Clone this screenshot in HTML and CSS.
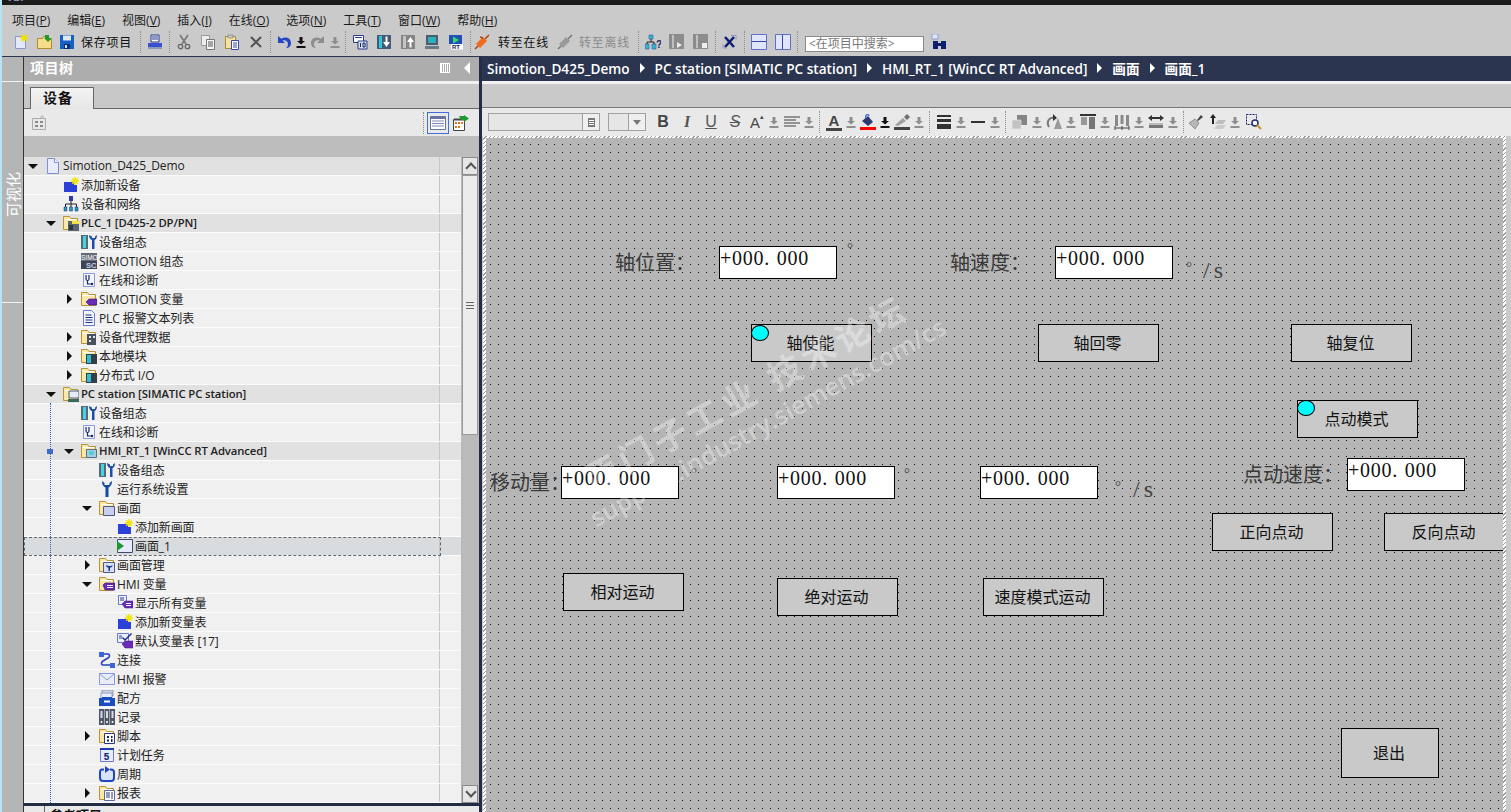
FILE: index.html
```html
<!DOCTYPE html>
<html lang="zh-CN">
<head>
    <meta charset="UTF-8">
    <title>Simotion_D425_Demo</title>
    <link rel="stylesheet" href="styles.css">
</head>
<body>
    <!-- icon sprite -->
    <svg class="sprite" xmlns="http://www.w3.org/2000/svg">
        <symbol id="i-add" viewBox="0 0 16 16"><path d="M1 5h10v3h3v7H1z" fill="#2c3fd8"/><path d="M12 0v8M8 4h8M9.2 1.2l5.6 5.6M14.8 1.2L9.200 6.800" stroke="#f2e600" stroke-width="1.400"/></symbol>
        <symbol id="i-new" viewBox="0 0 16 16"><path d="M2.500 2.500h10v12h-10z" fill="#e4e8fb" stroke="#8c96cf"/><path d="M11 0v8M7 4h8M8.200 1.200l5.600 5.600M13.800 1.200L8.200 6.800" stroke="#efe000" stroke-width="1.300"/></symbol>
        <symbol id="i-open" viewBox="0 0 16 16"><path d="M.5 4.500h5l1-2h4v3h4v9H.5z" fill="#f7dc8a" stroke="#b08a2c"/><path d="M6 1h4v3h3l-4 4-4-4h1z" fill="#1f9a2c" transform="translate(2 0)"/></symbol>
        <symbol id="i-save" viewBox="0 0 16 16"><path d="M1 1h14v14H1z" fill="#1560c4"/><path d="M4 1.500h8v5H4z" fill="#dfe8f8"/><path d="M5 10h6v5H5z" fill="#0b2f70"/><path d="M6 11h2v3H6z" fill="#cfe0f8"/></symbol>
        <symbol id="i-print" viewBox="0 0 16 16"><path d="M4 1h8v7H4z" fill="#fff" stroke="#23308f"/><path d="M5 3h6M5 5h6" stroke="#23308f"/><path d="M1 9h14v5H1z" fill="#3a50d0"/><path d="M1 13h14v2H1z" fill="#9098b8"/></symbol>
        <symbol id="i-cut" viewBox="0 0 16 16"><path d="M4 1l6 9M12 1l-6 9" stroke="#777" stroke-width="1.600" fill="none"/><circle cx="4.500" cy="12.500" r="2.200" fill="none" stroke="#666" stroke-width="1.300"/><circle cx="11.500" cy="12.500" r="2.200" fill="none" stroke="#666" stroke-width="1.300"/></symbol>
        <symbol id="i-copy" viewBox="0 0 16 16"><path d="M1.500 1.500h8v10h-8z" fill="#eee" stroke="#999"/><path d="M6.500 5.500h8v10h-8z" fill="#f6f6f6" stroke="#777"/><path d="M8 8h5M8 10h5M8 12h5" stroke="#555"/></symbol>
        <symbol id="i-paste" viewBox="0 0 16 16"><path d="M1.500 2.500h10v12h-10z" fill="#f6e3a0" stroke="#a98a30"/><path d="M4 1h5v3H4z" fill="#c8c8c8" stroke="#777" stroke-width=".6"/><path d="M7.500 6.500h7v9h-7z" fill="#fff" stroke="#3848a8"/><path d="M9 9h4M9 11h4M9 13h4" stroke="#3848a8"/></symbol>
        <symbol id="i-del" viewBox="0 0 16 16"><path d="M3 3l10 10M13 3L3 13" stroke="#555" stroke-width="2.200"/></symbol>
        <symbol id="i-undo" viewBox="0 0 16 16"><path d="M2 2v7h7L6.500 6.500C9 5.500 12 7 12 10c0 1.500-.5 3-2 4 3 0 5-2 5-5 0-4.500-5-7-9.700-4.200z" fill="#2446c0"/></symbol>
        <symbol id="i-redo" viewBox="0 0 16 16"><path d="M14 2v7H7l2.500-2.500C7 5.500 4 7 4 10c0 1.500.5 3 2 4-3 0-5-2-5-5 0-4.500 5-7 9.700-4.200z" fill="#8d8d8d"/></symbol>
        <symbol id="i-drop" viewBox="0 0 12 16"><path d="M4.500 3h3v4H10l-4 3.500L2 7h2.500zM1.500 12h9v2h-9z"/></symbol>
        <symbol id="i-compile" viewBox="0 0 16 16"><path d="M1.500 1.500h10v7h-10z" fill="#fff" stroke="#2c3c80"/><path d="M3 3.500h7" stroke="#2c3c80"/><path d="M6 7h9v8H6z" fill="#d8e0f6" stroke="#2c3c80"/><path d="M8.500 9v4M11 9h2v4h-2z" stroke="#182458" fill="none"/></symbol>
        <symbol id="i-down" viewBox="0 0 16 16"><path d="M1 1h14v14H1z" fill="#445a78"/><path d="M3 2h3v12H3z" fill="#2fc8d8"/><path d="M9.500 2.500h2V8H14l-3.500 5L7 8h2.500z" fill="#fff"/></symbol>
        <symbol id="i-up" viewBox="0 0 16 16"><path d="M1 1h14v14H1z" fill="#858585"/><path d="M3 2h3v12H3z" fill="#c4c4c4"/><path d="M9.500 13.500h2V8H14l-3.500-5L7 8h2.500z" fill="#fff"/></symbol>
        <symbol id="i-pc" viewBox="0 0 16 16"><path d="M2 1h12v10H2z" fill="#4b5b6b"/><path d="M4 3h8v6H4z" fill="#2fb0b8"/><path d="M1 12h14v3H1z" fill="#6c7a88"/></symbol>
        <symbol id="i-rt" viewBox="0 0 16 16"><path d="M1 1h13v9H1z" fill="#1e50b8"/><path d="M5 2.500l6 3.500-6 3.500z" fill="#3fd860"/><path d="M3 10h12v5.500H3z" fill="#fff"/><text x="4" y="15" font-size="6" font-weight="700" font-family="Liberation Sans" fill="#14245c">RT</text></symbol>
        <symbol id="i-online" viewBox="0 0 16 16"><path d="M2 10l7-7 4 4-7 7z" fill="#f06a20"/><path d="M11 5l4-4M4 12l-3 3M6 3l3 1" stroke="#b04010" stroke-width="1.500"/></symbol>
        <symbol id="i-offline" viewBox="0 0 16 16"><path d="M2 10l7-7 4 4-7 7z" fill="#9a9a9a"/><path d="M11 5l4-4M4 12l-3 3" stroke="#777" stroke-width="1.500"/></symbol>
        <symbol id="i-nethelp" viewBox="0 0 16 16"><path d="M4 1h4v4H4zM0 10h4v5H0zM7 10h4v5H7z" fill="#2fb8c8" stroke="#4050a8" stroke-width=".6"/><path d="M6 5v3M2 10V8h7v2" stroke="#222" fill="none"/><text x="11" y="14" font-size="10" font-weight="700" font-family="Liberation Sans" fill="#14246c">?</text></symbol>
        <symbol id="i-side" viewBox="0 0 16 16"><path d="M0 0h15v15H0z" fill="#8c8c8c"/><path d="M3 1h2v13H3z" fill="#c0c0c0"/><path d="M7 1h7v7H7z" fill="#8c8c8c"/><path d="M8 8l5 3-5 3z" fill="#eee"/></symbol>
        <symbol id="i-side2" viewBox="0 0 16 16"><path d="M0 0h15v15H0z" fill="#8c8c8c"/><path d="M3 1h2v13H3z" fill="#c0c0c0"/><path d="M9 9h5v5H9z" fill="#eee"/></symbol>
        <symbol id="i-xbox" viewBox="0 0 16 16"><path d="M3 3l9 10M12 3L3 13" stroke="#0e1e70" stroke-width="2.600"/><path d="M9 1.500h5v4" stroke="#8c96cf" fill="none"/><path d="M1 10v4h4" stroke="#8c96cf" fill="none"/></symbol>
        <symbol id="i-hsplit" viewBox="0 0 16 16"><path d="M.5.500h15v15H.5z" fill="#dfe6fb" stroke="#5f70c8"/><path d="M1 7.500h14" stroke="#3848a8"/></symbol>
        <symbol id="i-vsplit" viewBox="0 0 16 16"><path d="M.5.500h15v15H.5z" fill="#dfe6fb" stroke="#5f70c8"/><path d="M7.500 1v14" stroke="#3848a8"/></symbol>
        <symbol id="i-binoc" viewBox="0 0 16 16"><path d="M1 0h6v5H1z" fill="#dfe6fb" stroke="#6a78c8" stroke-width=".6"/><path d="M2 7h5v8H2zM10 7h5v8h-5z" fill="#101e70"/><path d="M7 9h3v3H7z" fill="#101e70"/></symbol>
        <symbol id="i-tree" viewBox="0 0 16 16"><path d="M1.500 3.500h13v11h-13z" fill="#e8e8e8" stroke="#aaa"/><path d="M4 6h3v2H4zM9 6h3v2H9zM4 10h3v2H4zM9 10h3v2H9z" fill="#888"/><path d="M11 0v4M9 2h4" stroke="#bbb"/></symbol>
        <symbol id="i-list" viewBox="0 0 16 16"><path d="M.5 1.500h15v13H.5z" fill="#fff" stroke="#6674a0"/><path d="M.5 3h15" stroke="#6674a0" stroke-width="2"/><path d="M2 6h12M2 8.500h12M2 11h12" stroke="#7c89b8"/></symbol>
        <symbol id="i-export" viewBox="0 0 16 16"><path d="M.5 4.500h11v11H.5z" fill="#fff" stroke="#444"/><path d="M1 4.500h10" stroke="#444" stroke-width="2"/><path d="M2 7h2v2H2zM5 7h2v2H5zM8 7h2v2H8zM2 11h2v2H2zM5 11h2v2H5z" fill="#e07820"/><path d="M6 1h5V0l5 3.500L11 7V5H8z" fill="#1f9a2c"/></symbol>
        <symbol id="i-doc" viewBox="0 0 16 16"><path d="M2.500.500h7l4 4v11h-11z" fill="#e8ecfd" stroke="#7f8ed8"/><path d="M9.500.5v4h4" fill="#fff" stroke="#7f8ed8"/></symbol>
        <symbol id="i-net" viewBox="0 0 16 16"><path d="M6 0h4v5H6z" fill="#2a3aa8"/><path d="M8 5v3M2.500 11V8h11v3M8 8v3" stroke="#222" fill="none"/><path d="M1 11h3v4H1zM6.500 11h3v4h-3zM12 11h3v4h-3z" fill="#2a9ab8" stroke="#223088" stroke-width=".5"/></symbol>
        <symbol id="i-folder" viewBox="0 0 16 16"><path d="M.5 14.500v-13h6l1.500 2h6.500v11z" fill="#fbe7a6" stroke="#b8923a"/><path d="M2 4h11v1H2z" fill="#fff"/></symbol>
        <symbol id="o-plc" viewBox="0 0 16 16"><path d="M5 6h11v10H5z" fill="#5a6470"/><path d="M9 6h7v3H9z" fill="#f2e23a"/><path d="M6 10h4v5H6z" fill="#2c3640"/></symbol>
        <symbol id="o-tag" viewBox="0 0 16 16"><path d="M5 11l3-3h8v6H8z" fill="#6a2cb8" stroke="#3c1478" stroke-width=".6"/></symbol>
        <symbol id="o-proxy" viewBox="0 0 16 16"><path d="M6 5h9v11H6z" fill="#47525e"/><path d="M8 7h2v2H8zM12 7h2v2h-2zM8 11h2v2H8z" fill="#dfe6ee"/></symbol>
        <symbol id="o-module" viewBox="0 0 16 16"><path d="M5 6h11v10H5z" fill="#33404c"/><path d="M6 7h4v8H6z" fill="#2fc0d0"/></symbol>
        <symbol id="o-pc" viewBox="0 0 16 16"><path d="M6 5h10v7H6z" fill="#e8ecf8" stroke="#4a5868"/><path d="M5 13h11v3H5z" fill="#3c6a58"/></symbol>
        <symbol id="o-hmi" viewBox="0 0 16 16"><path d="M5.500 6.500h10v8h-10z" fill="#a8cce0" stroke="#52708c"/><path d="M8 8h5v4H8z" fill="#56d0d8"/></symbol>
        <symbol id="o-screen" viewBox="0 0 16 16"><path d="M4.500 6.500h11v9h-11z" fill="#c6cff0" stroke="#505a80"/></symbol>
        <symbol id="o-manage" viewBox="0 0 16 16"><path d="M4.500 5.500h11v10h-11z" fill="#d8e0f4" stroke="#505a80"/><path d="M7 8c0 2 1.500 2.500 2.500 2.500V14h1.500v-3.500c1 0 2.500-.5 2.500-2.500l-1.500 1h-2.500z" fill="#14348c"/></symbol>
        <symbol id="o-var" viewBox="0 0 16 16"><path d="M4 9l2-2h10v7H6z" fill="#6a2cb8" stroke="#3c1478" stroke-width=".6"/><path d="M8 9.500h6M8 11.500h6" stroke="#fff"/></symbol>
        <symbol id="o-script" viewBox="0 0 16 16"><path d="M5.500 5.500h10v10h-10z" fill="#fff" stroke="#283878"/><path d="M8 8h2v2H8zM12 8h1.500v2H12zM8 11.500h2v2H8zM12 11h1.500v3H12z" fill="#141e5c"/></symbol>
        <symbol id="o-report" viewBox="0 0 16 16"><path d="M5.500 5.500h10v10h-10z" fill="#fff" stroke="#5a66a0"/><path d="M7 8h4M7 10h4M7 12h4M13 7v7" stroke="#283878"/></symbol>
        <symbol id="i-cfg" viewBox="0 0 16 16"><path d="M0 1h7v14H0z" fill="#5a6878"/><path d="M2 2h3v12H2z" fill="#3fd8e0"/><path d="M8 1c0 3 1.500 4.500 3 5v9h2.500V6c1.500-.5 2.500-2 2.500-5l-2 1.500V4h-3V2.500z" fill="#1c4fa8"/></symbol>
        <symbol id="i-sim" viewBox="0 0 16 16"><path d="M0 0h16v16H0z" fill="#3c4656"/><path d="M0 0h16v8H0z" fill="#666c78"/><text x="0" y="7" font-size="6.500" font-family="Liberation Sans" fill="#fff">SIMO</text><text x="5" y="15" font-size="7.500" font-weight="700" font-family="Liberation Sans" fill="#c8d2e8">SC</text></symbol>
        <symbol id="i-diag" viewBox="0 0 16 16"><path d="M2.500 1.500h11v13h-11z" fill="#f4f6fe" stroke="#8c9ad8"/><path d="M5 3v4c0 2 3 2 3 0V3M6.500 9v3h4" fill="none" stroke="#182868" stroke-width="1.200"/><circle cx="11" cy="12" r="1.200" fill="#182868"/></symbol>
        <symbol id="i-textlist" viewBox="0 0 16 16"><path d="M2.500.500h8l3 3v12h-11z" fill="#f2f4fe" stroke="#6a78c8"/><path d="M4.500 5h6M4.500 7.500h7M4.500 10h7M4.500 12.500h7" stroke="#1c2c80"/></symbol>
        <symbol id="i-wrench" viewBox="0 0 16 16"><path d="M3 0c0 4 2 6 3.500 6.500V16h3V6.500C11 6 13 4 13 0l-2.500 2v2h-5V2z" fill="#16489c"/></symbol>
        <symbol id="i-screen" viewBox="0 0 16 16"><path d="M.5 1.500h15v13H.5z" fill="#e6eafa" stroke="#414a6c"/><path d="M0 3l7 5-7 5z" fill="#1c9a30"/></symbol>
        <symbol id="i-all" viewBox="0 0 16 16"><path d="M1.500.500h8v9h-8z" fill="#eef0fc" stroke="#6a78c8"/><path d="M3 3h4M3 5h4" stroke="#2a3a90"/><path d="M5 9l3-3h8v7H8z" fill="#6a2cb8" stroke="#3c1478" stroke-width=".5"/><path d="M9 8.500h5M9 10.500h5" stroke="#fff"/></symbol>
        <symbol id="i-default" viewBox="0 0 16 16"><path d="M.5.500h11v9H.5z" fill="#eef0fc" stroke="#6a78c8"/><path d="M2 3h3M2 5h3" stroke="#2a3a90"/><path d="M6 4l2 2 6-6 1 1-7 7-3-3z" fill="#1c2c90"/><path d="M5 11l3-3h8v7H8z" fill="#6a2cb8" stroke="#3c1478" stroke-width=".5"/></symbol>
        <symbol id="i-conn" viewBox="0 0 16 16"><path d="M0 0h5v5H0zM11 11h5v5h-5z" fill="#3f63d8"/><path d="M5 2h4c2 0 2 3 0 4L4 9c-2 1-2 4 0 4h7" fill="none" stroke="#2842b8" stroke-width="1.600"/></symbol>
        <symbol id="i-mail" viewBox="0 0 16 16"><path d="M.5 2.500h15v11H.5z" fill="#e8ecfb" stroke="#8a9ad8"/><path d="M1 3l7 6 7-6" fill="none" stroke="#8a9ad8"/></symbol>
        <symbol id="i-recipe" viewBox="0 0 16 16"><path d="M3 0h11v6H3z" fill="#cfd6e8" stroke="#647094" stroke-width=".6"/><path d="M2 3h11v6H2z" fill="#eaf0ff" stroke="#647094" stroke-width=".6"/><path d="M0 8h3v-1h10v1h3v8H0z" fill="#1a4ec0"/><path d="M5 10.500h6v2H5z" fill="#fff"/></symbol>
        <symbol id="i-log" viewBox="0 0 16 16"><path d="M0 0h5v16H0zM5.500 0h5v16h-5zM11 0h5v16h-5z" fill="#4e5868"/><path d="M1.500 2h2v7h-2zM7 2h2v7H7zM12.500 2h2v7h-2z" fill="#d8dce6"/><circle cx="2.500" cy="13" r="1" fill="#fff"/><circle cx="8" cy="13" r="1" fill="#fff"/><circle cx="13.500" cy="13" r="1" fill="#fff"/></symbol>
        <symbol id="i-five" viewBox="0 0 16 16"><path d="M1.500 1.500h13v13h-13z" fill="#e6ecfc" stroke="#6a7ad0"/><path d="M1 1h14v2H1z" fill="#1e3cb0"/><text x="4.500" y="13" font-size="10" font-weight="700" font-family="Liberation Mono" fill="#14246c">5</text></symbol>
        <symbol id="i-cycle" viewBox="0 0 16 16"><path d="M5 3.500H3C1.500 3.500 1 5 1 6v6c0 2 1 3 3 3h8c2 0 3-1 3-3V6c0-1.500-1-2.500-3-2.500h-1" fill="#d8e2fa" stroke="#2046c0" stroke-width="2"/><path d="M6 0l5 3.500L6 7z" fill="#2046c0"/></symbol>
        <!-- format bar -->
        <symbol id="f-align" viewBox="0 0 16 16"><path d="M0 3h16M0 6h12M0 9h16M0 12h12" stroke="#777" stroke-width="1.500"/></symbol>
        <symbol id="f-fill" viewBox="0 0 16 16"><path d="M2 7l6-5 5 6-5 4z" fill="#2a3a70"/><path d="M6 4c-1-3 2-5 3-2" fill="none" stroke="#4a6ae0" stroke-width="1.500"/><path d="M0 13h16v3H0z" fill="#f00"/></symbol>
        <symbol id="f-pen" viewBox="0 0 16 16"><path d="M1 11l8-7 3 3-8 5z" fill="#a0a0a0"/><path d="M10 3l3-3 3 3-3 3z" fill="#707070"/><path d="M0 13h16v3H0z" fill="#444"/></symbol>
        <symbol id="f-weight" viewBox="0 0 16 16"><path d="M1 1h14v2H1zM1 5h14v3H1zM1 10h14v5H1z" fill="#333"/></symbol>
        <symbol id="f-dash" viewBox="0 0 16 16"><path d="M1 7h14v2H1z" fill="#333"/></symbol>
        <symbol id="f-layer" viewBox="0 0 16 16"><path d="M5 1h10v10H5z" fill="#858585"/><path d="M0 6h9v9H0z" fill="#c2c2c2" stroke="#e9e9e9" stroke-width=".6"/></symbol>
        <symbol id="f-rotate" viewBox="0 0 16 16"><path d="M8 15l4-11 4 11z" fill="#9a9a9a"/><path d="M3 13C0 8 3 3 8 4" fill="none" stroke="#777" stroke-width="2"/><path d="M7 0l4 4-4 3z" fill="#333"/></symbol>
        <symbol id="f-top" viewBox="0 0 16 16"><path d="M0 0h16v2H0z" fill="#333"/><path d="M1 3h6v8H1z" fill="#999"/><path d="M9 3h6v12H9z" fill="#777"/></symbol>
        <symbol id="f-dist" viewBox="0 0 16 16"><path d="M1 1h3v11H1zM6.500 1h3v9h-3zM12 1h3v11h-3z" fill="#8a8a8a"/><path d="M1 14h14M1 12v4M15 12v4M8 12v4" stroke="#444"/></symbol>
        <symbol id="f-same" viewBox="0 0 16 16"><path d="M0 4l4-3v2h8V1l4 3-4 3V5H4v2z" fill="#333"/><path d="M1 9h14v2H1z" fill="#bbb"/><path d="M1 11h14v3H1z" fill="#777"/></symbol>
        <symbol id="f-order" viewBox="0 0 16 16"><path d="M3 0l3 4H4v6H2V4H0z" fill="#222"/><path d="M8 6h8l-3 4H5z" fill="#bdbdbd"/><path d="M7 11h9l-3 4H4z" fill="#ccc"/></symbol>
        <symbol id="f-zoom" viewBox="0 0 16 16"><path d="M.5.500h10v10H.5z" fill="none" stroke="#14246c" stroke-dasharray="2 1"/><circle cx="9" cy="9" r="3" fill="#fff" stroke="#222c70" stroke-width="1.500"/><path d="M11 11l4 4" stroke="#c89a20" stroke-width="2.200"/></symbol>
        <symbol id="f-brush" viewBox="0 0 16 16"><path d="M9 6l4-5 2 2-5 4z" fill="#444"/><path d="M1 9l6-4 4 4-4 6z" fill="#b8b8b8" stroke="#666" stroke-width=".6"/></symbol>
    </svg>

    <div class="top-strip"><span class="app-mark">V17</span></div>

    <!-- Menu -->
    <nav class="menu-bar">
        <span class="menu-item">项目(<u>P</u>)</span>
        <span class="menu-item">编辑(<u>E</u>)</span>
        <span class="menu-item">视图(<u>V</u>)</span>
        <span class="menu-item">插入(<u>I</u>)</span>
        <span class="menu-item">在线(<u>O</u>)</span>
        <span class="menu-item">选项(<u>N</u>)</span>
        <span class="menu-item">工具(<u>T</u>)</span>
        <span class="menu-item">窗口(<u>W</u>)</span>
        <span class="menu-item">帮助(<u>H</u>)</span>
    </nav>

    <!-- Main toolbar -->
    <div class="toolbar">
        <span class="tool"><svg class="ico"><use href="#i-new"/></svg></span>
        <span class="tool"><svg class="ico"><use href="#i-open"/></svg></span>
        <span class="tool tool-save"><svg class="ico"><use href="#i-save"/></svg></span>
        <span class="tool-text save-text">保存项目</span>
        <span class="sep"></span>
        <span class="tool"><svg class="ico"><use href="#i-print"/></svg></span>
        <span class="sep"></span>
        <span class="tool"><svg class="ico"><use href="#i-cut"/></svg></span>
        <span class="tool"><svg class="ico"><use href="#i-copy"/></svg></span>
        <span class="tool"><svg class="ico"><use href="#i-paste"/></svg></span>
        <span class="tool"><svg class="ico"><use href="#i-del"/></svg></span>
        <span class="sep"></span>
        <span class="tool tool-sm"><svg class="ico"><use href="#i-undo"/></svg></span>
        <svg class="drop"><use href="#i-drop"/></svg>
        <span class="tool tool-sm"><svg class="ico"><use href="#i-redo"/></svg></span>
        <svg class="drop off"><use href="#i-drop"/></svg>
        <span class="sep sep-wide"></span>
        <span class="tool"><svg class="ico"><use href="#i-compile"/></svg></span>
        <span class="tool"><svg class="ico"><use href="#i-down"/></svg></span>
        <span class="tool"><svg class="ico"><use href="#i-up"/></svg></span>
        <span class="tool"><svg class="ico"><use href="#i-pc"/></svg></span>
        <span class="tool"><svg class="ico"><use href="#i-rt"/></svg></span>
        <span class="sep"></span>
        <span class="tool tool-xs"><svg class="ico"><use href="#i-online"/></svg></span>
        <span class="tool-text online-text">转至在线</span>
        <span class="tool tool-xs"><svg class="ico"><use href="#i-offline"/></svg></span>
        <span class="tool-text offline-text">转至离线</span>
        <span class="sep"></span>
        <span class="tool"><svg class="ico"><use href="#i-nethelp"/></svg></span>
        <span class="tool"><svg class="ico"><use href="#i-side"/></svg></span>
        <span class="tool"><svg class="ico"><use href="#i-side2"/></svg></span>
        <span class="sep"></span>
        <span class="tool"><svg class="ico"><use href="#i-xbox"/></svg></span>
        <span class="sep"></span>
        <span class="tool"><svg class="ico"><use href="#i-hsplit"/></svg></span>
        <span class="tool"><svg class="ico"><use href="#i-vsplit"/></svg></span>
        <span class="sep"></span>
        <span class="search-box">&lt;在项目中搜索&gt;</span>
        <span class="tool tool-find"><svg class="ico"><use href="#i-binoc"/></svg></span>
    </div>

    <div class="workspace">
        <!-- Vertical tab -->
        <aside class="side-strip"><span class="side-label">可视化</span></aside>

        <!-- Project tree -->
        <section class="tree-panel">
            <div class="panel-head">
                <span class="panel-title">项目树</span>
                <span class="panel-cols"></span>
                <span class="panel-collapse"></span>
            </div>
            <div class="panel-gap"></div>
            <div class="tab-strip"><span class="tab">设备</span></div>
            <div class="tree-tools">
                <svg class="ico"><use href="#i-tree"/></svg>
                <span class="tree-tools-right">
                    <span class="sep"></span>
                    <span class="tool-on"><svg class="ico"><use href="#i-list"/></svg></span>
                    <svg class="ico"><use href="#i-export"/></svg>
                </span>
            </div>
            <div class="tree-head"></div>
            <div class="tree-body">
                <div class="tree-rows">
                    <div class="row lv0 group"><span class="tw open"></span><svg class="ico"><use href="#i-doc"/></svg><span class="name">Simotion_D425_Demo</span></div>
                    <div class="row lv1"><span class="tw"></span><svg class="ico"><use href="#i-add"/></svg><span class="name">添加新设备</span></div>
                    <div class="row lv1"><span class="tw"></span><svg class="ico"><use href="#i-net"/></svg><span class="name">设备和网络</span></div>
                    <div class="row lv1 group"><span class="tw open"></span><svg class="ico"><use href="#i-folder"/><use href="#o-plc"/></svg><span class="name strong">PLC_1 [D425-2 DP/PN]</span></div>
                    <div class="row lv2"><span class="tw"></span><svg class="ico"><use href="#i-cfg"/></svg><span class="name">设备组态</span></div>
                    <div class="row lv2"><span class="tw"></span><svg class="ico"><use href="#i-sim"/></svg><span class="name">SIMOTION 组态</span></div>
                    <div class="row lv2"><span class="tw"></span><svg class="ico"><use href="#i-diag"/></svg><span class="name">在线和诊断</span></div>
                    <div class="row lv2"><span class="tw shut"></span><svg class="ico"><use href="#i-folder"/><use href="#o-tag"/></svg><span class="name">SIMOTION 变量</span></div>
                    <div class="row lv2"><span class="tw"></span><svg class="ico"><use href="#i-textlist"/></svg><span class="name">PLC 报警文本列表</span></div>
                    <div class="row lv2"><span class="tw shut"></span><svg class="ico"><use href="#i-folder"/><use href="#o-proxy"/></svg><span class="name">设备代理数据</span></div>
                    <div class="row lv2"><span class="tw shut"></span><svg class="ico"><use href="#i-folder"/><use href="#o-module"/></svg><span class="name">本地模块</span></div>
                    <div class="row lv2"><span class="tw shut"></span><svg class="ico"><use href="#i-folder"/><use href="#o-module"/></svg><span class="name">分布式 I/O</span></div>
                    <div class="row lv1 group"><span class="tw open"></span><svg class="ico"><use href="#i-folder"/><use href="#o-pc"/></svg><span class="name strong">PC station [SIMATIC PC station]</span></div>
                    <div class="row lv2"><span class="tw"></span><svg class="ico"><use href="#i-cfg"/></svg><span class="name">设备组态</span></div>
                    <div class="row lv2"><span class="tw"></span><svg class="ico"><use href="#i-diag"/></svg><span class="name">在线和诊断</span></div>
                    <div class="row lv2 group"><span class="tw open"></span><svg class="ico"><use href="#i-folder"/><use href="#o-hmi"/></svg><span class="name strong">HMI_RT_1 [WinCC RT Advanced]</span></div>
                    <div class="row lv3"><span class="tw"></span><svg class="ico"><use href="#i-cfg"/></svg><span class="name">设备组态</span></div>
                    <div class="row lv3"><span class="tw"></span><svg class="ico"><use href="#i-wrench"/></svg><span class="name">运行系统设置</span></div>
                    <div class="row lv3"><span class="tw open"></span><svg class="ico"><use href="#i-folder"/><use href="#o-screen"/></svg><span class="name">画面</span></div>
                    <div class="row lv4"><span class="tw"></span><svg class="ico"><use href="#i-add"/></svg><span class="name">添加新画面</span></div>
                    <div class="row lv4 selected"><span class="tw"></span><svg class="ico"><use href="#i-screen"/></svg><span class="name">画面_1</span></div>
                    <div class="row lv3"><span class="tw shut"></span><svg class="ico"><use href="#i-folder"/><use href="#o-manage"/></svg><span class="name">画面管理</span></div>
                    <div class="row lv3"><span class="tw open"></span><svg class="ico"><use href="#i-folder"/><use href="#o-var"/></svg><span class="name">HMI 变量</span></div>
                    <div class="row lv4"><span class="tw"></span><svg class="ico"><use href="#i-all"/></svg><span class="name">显示所有变量</span></div>
                    <div class="row lv4"><span class="tw"></span><svg class="ico"><use href="#i-add"/></svg><span class="name">添加新变量表</span></div>
                    <div class="row lv4"><span class="tw"></span><svg class="ico"><use href="#i-default"/></svg><span class="name">默认变量表 [17]</span></div>
                    <div class="row lv3"><span class="tw"></span><svg class="ico"><use href="#i-conn"/></svg><span class="name">连接</span></div>
                    <div class="row lv3"><span class="tw"></span><svg class="ico"><use href="#i-mail"/></svg><span class="name">HMI 报警</span></div>
                    <div class="row lv3"><span class="tw"></span><svg class="ico"><use href="#i-recipe"/></svg><span class="name">配方</span></div>
                    <div class="row lv3"><span class="tw"></span><svg class="ico"><use href="#i-log"/></svg><span class="name">记录</span></div>
                    <div class="row lv3"><span class="tw shut"></span><svg class="ico"><use href="#i-folder"/><use href="#o-script"/></svg><span class="name">脚本</span></div>
                    <div class="row lv3"><span class="tw"></span><svg class="ico"><use href="#i-five"/></svg><span class="name">计划任务</span></div>
                    <div class="row lv3"><span class="tw"></span><svg class="ico"><use href="#i-cycle"/></svg><span class="name">周期</span></div>
                    <div class="row lv3"><span class="tw shut"></span><svg class="ico"><use href="#i-folder"/><use href="#o-report"/></svg><span class="name">报表</span></div>
                    <span class="guide-line"></span>
                    <span class="guide-mark"></span>
                </div>
                <div class="scrollbar">
                    <span class="sb-btn sb-up"></span>
                    <span class="sb-thumb"><span class="sb-grip"></span></span>
                    <span class="sb-track"></span>
                    <span class="sb-btn sb-down"></span>
                </div>
            </div>
            <div class="ref-row"><span class="ref-label">参考项目</span></div>
        </section>

        <!-- Editor -->
        <section class="editor">
            <div class="crumbs">
                <span>Simotion_D425_Demo</span><i class="crumb-arrow"></i>
                <span>PC station [SIMATIC PC station]</span><i class="crumb-arrow"></i>
                <span>HMI_RT_1 [WinCC RT Advanced]</span><i class="crumb-arrow"></i>
                <span>画面</span><i class="crumb-arrow"></i>
                <span>画面_1</span>
            </div>
            <div class="panel-gap"></div>
            <div class="editor-blank"></div>
            <div class="format-bar">
                <span class="combo combo-font"><span class="combo-btn"><span class="combo-lines"></span></span></span>
                <span class="combo combo-size"><span class="combo-btn"><span class="combo-caret"></span></span></span>
                <span class="fmt-btn bold">B</span>
                <span class="fmt-btn ital">I</span>
                <span class="fmt-btn undl">U</span>
                <span class="fmt-btn strk">S</span>
                <span class="pair"><span class="fmt-icon fmt-a">A<sup>▴</sup></span><svg class="drop off"><use href="#i-drop"/></svg></span>
                <span class="pair pair-align"><span class="fmt-icon"><svg class="ico"><use href="#f-align"/></svg></span><svg class="drop off"><use href="#i-drop"/></svg></span>
                <span class="sep sep-fmt"></span>
                <span class="pair"><span class="fmt-icon"><span class="fmt-color">A</span></span><svg class="drop off"><use href="#i-drop"/></svg></span>
                <span class="pair"><span class="fmt-icon"><svg class="ico"><use href="#f-fill"/></svg></span><svg class="drop"><use href="#i-drop"/></svg></span>
                <span class="pair"><span class="fmt-icon"><svg class="ico"><use href="#f-pen"/></svg></span><svg class="drop off"><use href="#i-drop"/></svg></span>
                <span class="sep sep-fmt"></span>
                <span class="pair"><span class="fmt-icon"><svg class="ico"><use href="#f-weight"/></svg></span><svg class="drop off"><use href="#i-drop"/></svg></span>
                <span class="pair"><span class="fmt-icon"><svg class="ico"><use href="#f-dash"/></svg></span><svg class="drop off"><use href="#i-drop"/></svg></span>
                <span class="sep sep-fmt"></span>
                <span class="pair"><span class="fmt-icon"><svg class="ico"><use href="#f-layer"/></svg></span><svg class="drop off"><use href="#i-drop"/></svg></span>
                <span class="pair"><span class="fmt-icon"><svg class="ico"><use href="#f-rotate"/></svg></span><svg class="drop off"><use href="#i-drop"/></svg></span>
                <span class="pair"><span class="fmt-icon"><svg class="ico"><use href="#f-top"/></svg></span><svg class="drop off"><use href="#i-drop"/></svg></span>
                <span class="pair"><span class="fmt-icon"><svg class="ico"><use href="#f-dist"/></svg></span><svg class="drop off"><use href="#i-drop"/></svg></span>
                <span class="pair"><span class="fmt-icon"><svg class="ico"><use href="#f-same"/></svg></span><svg class="drop off"><use href="#i-drop"/></svg></span>
                <span class="sep sep-fmt"></span>
                <svg class="ico fmt-brush"><use href="#f-brush"/></svg>
                <span class="pair pair-order"><span class="fmt-icon"><svg class="ico"><use href="#f-order"/></svg></span><svg class="drop off"><use href="#i-drop"/></svg></span>
                <span class="fmt-icon"><svg class="ico"><use href="#f-zoom"/></svg></span>
            </div>

            <!-- HMI screen -->
            <div class="canvas-frame">
                <div class="canvas">
                    <span class="hmi-label" style="left:129px;top:112px">轴位置：</span>
                    <span class="hmi-field" style="left:233px;top:108px">+000. 000</span>
                    <span class="hmi-deg" style="left:361px;top:100px">°</span>

                    <span class="hmi-label" style="left:464px;top:112px">轴速度：</span>
                    <span class="hmi-field" style="left:569px;top:108px">+000. 000</span>
                    <span class="hmi-deg" style="left:700px;top:119px">°</span>
                    <span class="hmi-unit" style="left:717px;top:120px">/s</span>

                    <button class="hmi-btn" style="left:265px;top:186px">轴使能</button>
                    <span class="hmi-led" style="left:265px;top:187px"></span>
                    <button class="hmi-btn" style="left:552px;top:186px">轴回零</button>
                    <button class="hmi-btn" style="left:805px;top:186px">轴复位</button>

                    <button class="hmi-btn" style="left:811px;top:262px">点动模式</button>
                    <span class="hmi-led" style="left:811px;top:262px"></span>

                    <span class="hmi-label" style="left:4px;top:332px">移动量：</span>
                    <span class="hmi-field" style="left:75px;top:328px">+000. 000</span>
                    <span class="hmi-deg" style="left:205px;top:325px">°</span>
                    <span class="hmi-field" style="left:291px;top:328px">+000. 000</span>
                    <span class="hmi-deg" style="left:418px;top:325px">°</span>
                    <span class="hmi-field" style="left:494px;top:328px">+000. 000</span>
                    <span class="hmi-deg" style="left:629px;top:338px">°</span>
                    <span class="hmi-unit" style="left:647px;top:339px">/s</span>

                    <span class="hmi-label" style="left:757px;top:324px">点动速度：</span>
                    <span class="hmi-field" style="left:861px;top:320px">+000. 000</span>

                    <button class="hmi-btn" style="left:726px;top:375px">正向点动</button>
                    <button class="hmi-btn" style="left:898px;top:375px">反向点动</button>

                    <button class="hmi-btn" style="left:77px;top:435px">相对运动</button>
                    <button class="hmi-btn" style="left:291px;top:440px">绝对运动</button>
                    <button class="hmi-btn" style="left:497px;top:440px">速度模式运动</button>

                    <button class="hmi-btn exit-btn" style="left:855px;top:590px">退出</button>

                    <div class="watermark">
                        <div class="wm-title">西门子工业 技术论坛</div>
                        <div class="wm-url">support.industry.siemens.com/cs</div>
                    </div>
                </div>
            </div>
        </section>
    </div>
</body>
</html>
```
FILE: styles.css
```css
* {
    box-sizing: border-box;
}
html, body {
    margin: 0;
    height: 812px;
    overflow: hidden;
}
body {
    display: flex;
    flex-direction: column;
    font-family: "Open Sans", "Noto Sans CJK SC", sans-serif;
    font-size: 12px;
    color: #111;
    background-color: #cacaca;
    border-left: 2px solid #b5e4f2;
}
.sprite {
    display: none;
}
.ico {
    width: 16px;
    height: 16px;
    flex: none;
    display: block;
}

/* top window strip */
.top-strip {
    height: 5px;
    flex: none;
    margin-left: -2px;
    background-color: #1b1b1b;
    overflow: hidden;
    position: relative;
}
.app-mark {
    position: absolute;
    left: 6px;
    top: -9px;
    font: bold 11px "Liberation Sans", sans-serif;
    color: #8a93b8;
}

/* menu */
.menu-bar {
    height: 23px;
    flex: none;
    display: flex;
    align-items: center;
    gap: 17px;
    padding: 7px 0 0 10px;
}
.menu-item {
    font-size: 12px;
    white-space: nowrap;
    color: #1a1a1a;
}
.menu-item u {
    text-underline-offset: 1px;
}

/* main toolbar */
.toolbar {
    height: 28px;
    flex: none;
    display: flex;
    align-items: center;
    padding-left: 7px;
}
.tool {
    width: 24px;
    height: 20px;
    display: flex;
    align-items: center;
    justify-content: center;
    flex: none;
}
.tool-save {
    width: 20px;
}
.tool-sm {
    width: 22px;
}
.tool-xs {
    width: 18px;
}
.tool-find {
    margin-left: 3px;
}
.tool-text {
    letter-spacing: .75px;
    white-space: nowrap;
    flex: none;
    width: 51px;
}
.save-text {
    margin: 0 7px 0 4px;
    width: 50px;
}
.online-text {
    margin: 0 7px;
}
.offline-text {
    margin: 0 6px 0 5px;
    color: #8b8b8b;
}
.sep {
    width: 1px;
    height: 22px;
    margin: 0 2px;
    flex: none;
    border-left: 1px dotted #8c8c8c;
}
.sep-wide {
    margin-left: 4px;
}
.drop {
    width: 12px;
    height: 16px;
    flex: none;
    fill: #111;
}
.drop.off {
    fill: #8e8e8e;
}
.search-box {
    width: 119px;
    height: 16px;
    margin: 0 0 4px 5px;
    align-self: flex-end;
    flex: none;
    background-color: #fff;
    border: 1px solid #8a8a8a;
    color: #777;
    line-height: 14px;
    padding-left: 3px;
    white-space: nowrap;
}

/* workspace */
.workspace {
    flex: 1;
    display: flex;
    min-height: 0;
    border-top: 1px solid #2b3550;
}
.side-strip {
    width: 22px;
    flex: none;
    background-color: #b5b5b5;
    border-right: 1px solid #333;
    padding-top: 113px;
    display: flex;
    justify-content: center;
    position: relative;
}
.side-strip::before, .side-strip::after {
    content: "";
    position: absolute;
    left: 0;
    right: 0;
    height: 1px;
    background-color: #f2f2f2;
}
.side-strip::before {
    top: 24px;
}
.side-strip::after {
    top: 245px;
}
.side-label {
    writing-mode: vertical-rl;
    text-orientation: sideways;
    transform: rotate(180deg);
    height: 47px;
    color: #fff;
    font-size: 15px;
    line-height: 18px;
    white-space: nowrap;
}

/* project tree */
.tree-panel {
    width: 458px;
    flex: none;
    display: flex;
    flex-direction: column;
    border-right: 3px solid #222c44;
}
.panel-head {
    height: 24px;
    flex: none;
    display: flex;
    align-items: center;
    background-color: #adadad;
    padding: 0 9px 5px 6px;
}
.panel-title {
    flex: 1;
    color: #fff;
    font-size: 14px;
    font-weight: bold;
    letter-spacing: .5px;
}
.panel-cols {
    width: 10px;
    height: 10px;
    margin: 3px 14px 0 0;
    background: repeating-linear-gradient(90deg, #fff 0 1px, #adadad 1px 2px);
    border: 1px solid #fff;
}
.panel-collapse {
    margin-top: 3px;
    border-style: solid;
    border-width: 6px 6px 6px 0;
    border-color: transparent #fff transparent transparent;
}
.panel-gap {
    height: 3px;
    flex: none;
    background-color: #f1f1f1;
}
.tab-strip {
    height: 25px;
    flex: none;
    background-color: #c8c8c8;
    border-bottom: 1px solid #666;
    padding: 3px 0 0 6px;
}
.tab {
    display: block;
    width: 64px;
    height: 22px;
    padding-left: 12px;
    background: linear-gradient(#f3f3f3, #e6e6e6);
    border: 1px solid #666;
    border-bottom: none;
    font-size: 14px;
    font-weight: bold;
    line-height: 20px;
    letter-spacing: 1px;
}
.tree-tools {
    height: 27px;
    flex: none;
    display: flex;
    align-items: center;
    justify-content: space-between;
    padding: 0 10px 0 7px;
    background-color: #e9e9e9;
}
.tree-tools-right {
    display: flex;
    align-items: center;
    gap: 1px;
}
.tool-on {
    width: 22px;
    height: 22px;
    margin-right: 3px;
    border: 1px solid #3f6fd8;
    display: flex;
    align-items: center;
    justify-content: center;
}
.tree-head {
    height: 21px;
    flex: none;
    background-color: #bdbdbd;
}
.tree-body {
    height: 646px;
    flex: none;
    display: flex;
    background-color: #f0f0f0;
}
.tree-rows {
    flex: 1;
    position: relative;
    min-width: 0;
}
.row {
    height: 19px;
    display: flex;
    align-items: center;
    background-color: #f0f0f0;
    border-bottom: 1px solid #fbfbfb;
    white-space: nowrap;
    position: relative;
}
.row::after {
    content: "";
    width: 21px;
    flex: none;
    align-self: stretch;
    border-left: 1px solid #c6c6c6;
}
.row.group {
    background-color: #e1e1e1;
}
.row.selected {
    background-color: #d8dcdf;
}
.row.selected::before {
    content: "";
    position: absolute;
    left: 0;
    right: 20px;
    top: 0;
    bottom: -1px;
    border: 1px dashed #666;
}
.lv0 { padding-left: 3px; }
.lv1 { padding-left: 21px; }
.lv2 { padding-left: 39px; }
.lv3 { padding-left: 57px; }
.lv4 { padding-left: 75px; }
.tw {
    width: 18px;
    flex: none;
    display: flex;
    justify-content: center;
    padding-right: 6px;
}
.tw.open::before {
    content: "";
    border-style: solid;
    border-width: 5px 5px 0;
    border-color: #111 transparent transparent;
}
.tw.shut::before {
    content: "";
    border-style: solid;
    border-width: 5px 0 5px 5px;
    border-color: transparent transparent transparent #111;
}
.name {
    flex: 1;
    margin-left: 2px;
    font-size: 12px;
    color: #222;
    letter-spacing: -.1px;
}
.lv0 .name {
    padding-bottom: 2px;
}
.name.strong {
    font-weight: 600;
    font-size: 11.3px;
    padding-bottom: 2px;
}
.guide-line {
    position: absolute;
    left: 26px;
    top: 246px;
    bottom: 0;
    border-left: 1px dotted #2a5fd0;
}
.guide-mark {
    position: absolute;
    left: 23px;
    top: 292px;
    width: 6px;
    height: 5px;
    background-color: #3a6cc8;
}
.scrollbar {
    width: 18px;
    flex: none;
    display: flex;
    flex-direction: column;
    background-color: #bababa;
    padding: 0 1px;
}
.sb-btn {
    height: 18px;
    flex: none;
    background-color: #e6e6e6;
    border: 1px solid #8a8a8a;
    position: relative;
}
.sb-btn::before {
    content: "";
    position: absolute;
    left: 4px;
    width: 6px;
    height: 6px;
    border-left: 2px solid #555;
    border-top: 2px solid #555;
}
.sb-up::before {
    top: 6px;
    transform: rotate(45deg);
}
.sb-down::before {
    top: 2px;
    transform: rotate(225deg);
}
.sb-thumb {
    height: 260px;
    flex: none;
    background-color: #ececec;
    border: 1px solid #9a9a9a;
    display: flex;
    align-items: center;
    justify-content: center;
}
.sb-grip {
    width: 8px;
    height: 7px;
    border-top: 1px solid #666;
    border-bottom: 1px solid #666;
    background: linear-gradient(#666, #666) center / 100% 1px no-repeat;
}
.sb-track {
    flex: 1;
}
.ref-row {
    flex: 1;
    border-top: 3px solid #222c44;
    background-color: #e9e9e9;
    padding-left: 20px;
    overflow: hidden;
}
.ref-label {
    display: block;
    font-size: 13px;
    font-weight: bold;
    line-height: 18px;
    padding-left: 5px;
    border-left: 1px solid #666;
}

/* editor */
.editor {
    flex: 1;
    min-width: 0;
    display: flex;
    flex-direction: column;
}
.crumbs {
    height: 24px;
    flex: none;
    display: flex;
    align-items: center;
    gap: 10px;
    padding: 0 0 2px 5px;
    background-color: #2b3550;
    color: #fff;
    font-size: 13.6px;
    font-weight: 600;
    white-space: nowrap;
}
.crumb-arrow {
    flex: none;
    border-style: solid;
    border-width: 5px 0 5px 5px;
    border-color: transparent transparent transparent #fff;
}
.editor-blank {
    height: 24px;
    flex: none;
    background-color: #c9c9c9;
    border-bottom: 1px solid #777;
}
.format-bar {
    height: 28px;
    flex: none;
    display: flex;
    align-items: center;
    padding-left: 6px;
    background-color: #e9e9e9;
}
.combo {
    height: 18px;
    flex: none;
    display: flex;
    justify-content: flex-end;
    border: 1px solid #a0a0a0;
    background-color: #e6e6e6;
}
.combo-font {
    width: 112px;
}
.combo-size {
    width: 38px;
    margin-left: 8px;
    margin-right: 5px;
}
.combo-btn {
    width: 17px;
    display: flex;
    align-items: center;
    justify-content: center;
    border-left: 1px solid #a0a0a0;
    background-color: #efefef;
}
.combo-lines {
    width: 7px;
    height: 9px;
    border: 1px solid #777;
    background: repeating-linear-gradient(#777 0 1px, #fff 1px 2px);
}
.combo-caret {
    border-style: solid;
    border-width: 5px 4px 0;
    border-color: #777 transparent transparent;
}
.fmt-btn {
    width: 24px;
    flex: none;
    text-align: center;
    font: 16px "Liberation Sans", sans-serif;
    color: #555;
}
.fmt-btn.bold {
    font-weight: bold;
    color: #444;
}
.fmt-btn.ital {
    font-style: italic;
    font-family: "Liberation Serif", serif;
    font-weight: bold;
}
.fmt-btn.undl {
    text-decoration: underline;
}
.fmt-btn.strk {
    text-decoration: line-through;
    font-style: italic;
}
.pair {
    width: 34px;
    flex: none;
    display: flex;
    align-items: center;
}
.pair-align {
    margin-left: 1px;
}
.pair-order {
    width: 36px;
}
.fmt-icon {
    width: 20px;
    height: 18px;
    flex: none;
    display: flex;
    align-items: center;
    justify-content: center;
    margin-right: 1px;
}
.fmt-a {
    font: 15px "Liberation Sans", sans-serif;
    color: #444;
}
.fmt-a sup {
    font-size: 7px;
    line-height: 1;
    align-self: flex-start;
}
.fmt-color {
    width: 16px;
    height: 17px;
    text-align: center;
    font: bold 15px/14px "Liberation Sans", sans-serif;
    color: #444;
    border-bottom: 3px solid #444;
}
.sep-fmt {
    margin: 0 4px 0 3px;
}
.fmt-brush {
    margin-right: 4px;
}

/* HMI canvas */
.canvas-frame {
    flex: 1;
    min-height: 0;
    margin-left: 1px;
    margin-right: 5px;
    padding: 2px 3px 0;
    background: repeating-linear-gradient(135deg, #fff 0 2px, #9c9c9c 2px 3px);
}
.canvas {
    height: 100%;
    position: relative;
    overflow: hidden;
    background-color: #b5b5b5;
    background-image: radial-gradient(circle at 4.5px 6.5px, #111 .6px, transparent .9px);
    background-size: 8px 8px;
}
.hmi-label, .hmi-field, .hmi-deg, .hmi-unit, .hmi-led, .hmi-btn {
    position: absolute;
}
.hmi-label {
    font-size: 20px;
    line-height: 26px;
    color: #3a3a3a;
    white-space: nowrap;
}
.hmi-field {
    width: 118px;
    height: 33px;
    background-color: #fff;
    border: 1px solid #000;
    font: 20px/22px "Liberation Serif", serif;
    word-spacing: 1px;
    letter-spacing: .75px;
    white-space: nowrap;
}
.hmi-deg {
    font: 15px/20px "Liberation Serif", serif;
    color: #444;
}
.hmi-unit {
    font: 24px/24px "Liberation Serif", serif;
    letter-spacing: 4px;
    color: #444;
}
.hmi-btn {
    width: 121px;
    height: 38px;
    padding: 0 2px 2px 0;
    font-family: "Noto Sans CJK SC", sans-serif;
    font-size: 16px;
    color: #111;
    background-color: #c9c9c9;
    border: 1px solid #000;
    border-radius: 0;
}
.exit-btn {
    width: 98px;
    height: 50px;
}
.hmi-led {
    width: 18px;
    height: 16px;
    border-radius: 50%;
    background-color: #00ffff;
    border: 1px solid #000;
}
.watermark {
    position: absolute;
    left: 91px;
    top: 326px;
    transform: rotate(-29deg);
    transform-origin: left top;
    color: rgba(255, 255, 255, .36);
    white-space: nowrap;
    pointer-events: none;
}
.wm-title {
    font-size: 34px;
    font-weight: bold;
    line-height: 40px;
    letter-spacing: 5px;
}
.wm-url {
    margin-left: -14px;
    font-family: "Open Sans", sans-serif;
    font-size: 25px;
    font-weight: 600;
    line-height: 30px;
}
```
